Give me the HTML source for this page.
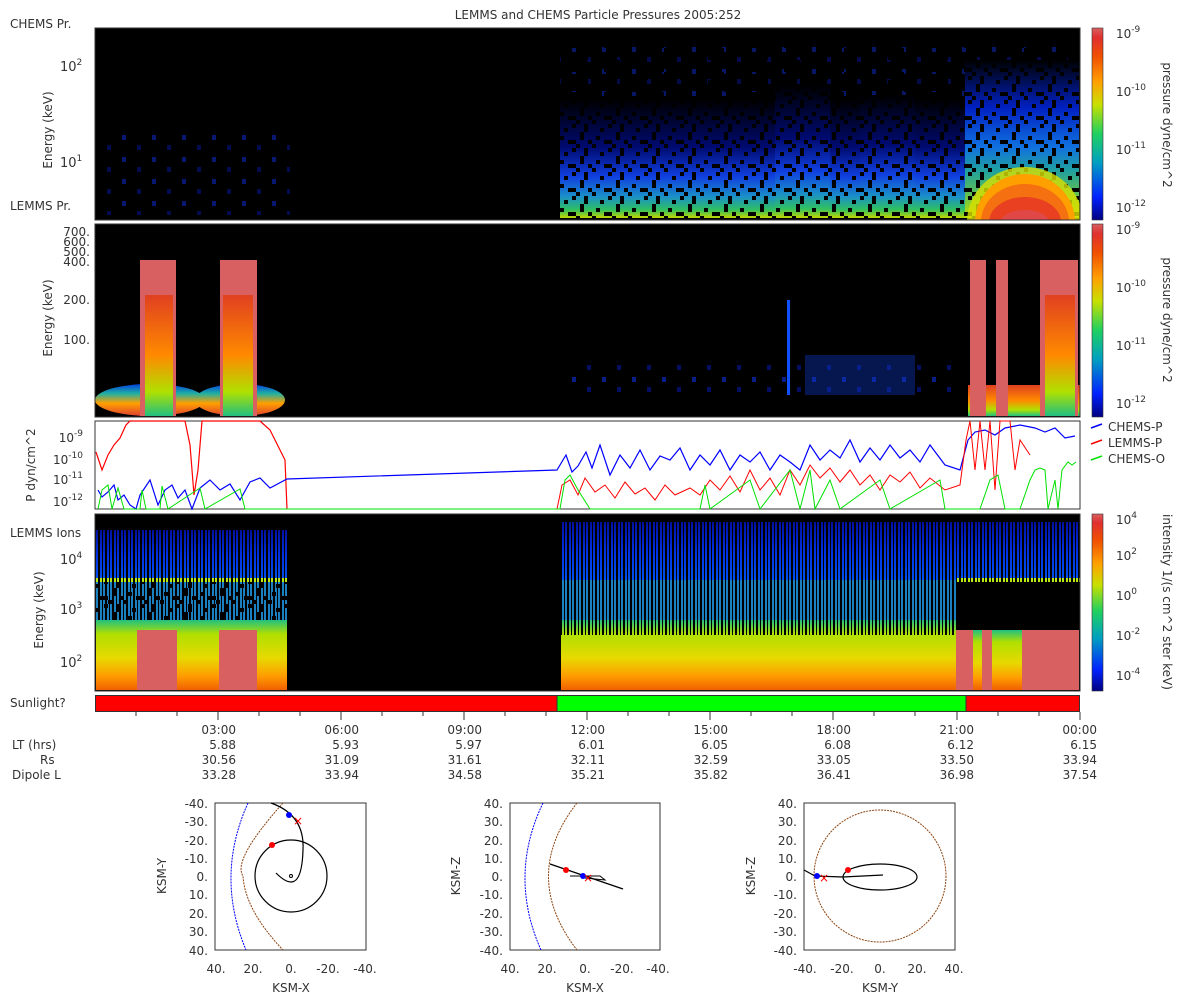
<!DOCTYPE html>
<html><head><meta charset="utf-8"><style>
body{margin:0;background:#fff;}
svg{display:block;font-family:"DejaVu Sans","Liberation Sans",sans-serif;}
text{fill:#333;}
</style></head><body>
<svg width="1200" height="1000" viewBox="0 0 1200 1000" xmlns="http://www.w3.org/2000/svg">
<defs>
<clipPath id="c1"><rect x="95" y="28" width="985" height="192"/></clipPath>
<linearGradient id="cb" x1="0" y1="1" x2="0" y2="0">
<stop offset="0" stop-color="#000080"/><stop offset="0.12" stop-color="#0022ff"/><stop offset="0.3" stop-color="#00a0c0"/><stop offset="0.45" stop-color="#20d060"/><stop offset="0.6" stop-color="#c8e000"/><stop offset="0.72" stop-color="#ffa000"/><stop offset="0.85" stop-color="#f05000"/><stop offset="0.95" stop-color="#e03030"/><stop offset="1" stop-color="#d86060"/>
</linearGradient>
<linearGradient id="p1r" x1="0" y1="0" x2="0" y2="1">
<stop offset="0" stop-color="#000"/><stop offset="0.3" stop-color="#0020c0"/><stop offset="0.55" stop-color="#1070e0"/><stop offset="0.7" stop-color="#20a0a0"/><stop offset="0.85" stop-color="#60c050"/><stop offset="1" stop-color="#c0e000"/>
</linearGradient>
<linearGradient id="p1m" x1="0" y1="0" x2="0" y2="1">
<stop offset="0" stop-color="#000"/><stop offset="0.4" stop-color="#000a70"/><stop offset="0.65" stop-color="#1040e0"/><stop offset="0.82" stop-color="#1a90c8"/><stop offset="0.93" stop-color="#30c060"/><stop offset="1" stop-color="#c0d800"/>
</linearGradient>
<linearGradient id="p4" x1="0" y1="0" x2="0" y2="1">
<stop offset="0" stop-color="#20c080"/><stop offset="0.2" stop-color="#b0e000"/><stop offset="0.55" stop-color="#e8d800"/><stop offset="0.8" stop-color="#ff9c00"/><stop offset="1" stop-color="#f06000"/>
</linearGradient>
<linearGradient id="p4b" x1="0" y1="0" x2="0" y2="1">
<stop offset="0" stop-color="#0010a0"/><stop offset="0.5" stop-color="#0030e0"/><stop offset="1" stop-color="#0050f0"/>
</linearGradient>
<linearGradient id="p2f" x1="0" y1="0" x2="0" y2="1">
<stop offset="0" stop-color="#0040e0"/><stop offset="0.3" stop-color="#20b0a0"/><stop offset="0.6" stop-color="#ffa000"/><stop offset="1" stop-color="#e04030"/>
</linearGradient>
<linearGradient id="p2i" x1="0" y1="0" x2="0" y2="1">
<stop offset="0" stop-color="#e04020"/><stop offset="0.5" stop-color="#ff8a00"/><stop offset="0.8" stop-color="#b0e000"/><stop offset="1" stop-color="#20c080"/>
</linearGradient>
<pattern id="dots1" width="30" height="22" patternUnits="userSpaceOnUse">
<rect x="2" y="3" width="4" height="5" fill="#1030e0"/><rect x="17" y="13" width="4" height="5" fill="#0818a0"/>
</pattern>
<pattern id="nz" width="36" height="24" patternUnits="userSpaceOnUse">
<rect x="0" y="0" width="4" height="4" fill="#000"/><rect x="8" y="4" width="4" height="8" fill="#000"/><rect x="16" y="0" width="4" height="4" fill="#000"/><rect x="24" y="8" width="4" height="4" fill="#000"/><rect x="32" y="4" width="4" height="4" fill="#000"/><rect x="4" y="12" width="4" height="8" fill="#000"/><rect x="20" y="16" width="4" height="4" fill="#000"/><rect x="28" y="20" width="8" height="4" fill="#000"/><rect x="12" y="20" width="4" height="4" fill="#000"/>
</pattern>
<pattern id="cols" width="7" height="10" patternUnits="userSpaceOnUse">
<rect x="0" y="0" width="2" height="10" fill="#000"/><rect x="4" y="0" width="1" height="10" fill="#000"/>
</pattern>
</defs>

<text x="598" y="19" font-size="12" text-anchor="middle">LEMMS and CHEMS Particle Pressures  2005:252</text>

<!-- Panel 1 -->
<rect x="95" y="28" width="985" height="192" fill="#000"/>
<g clip-path="url(#c1)">
<rect x="100" y="130" width="190" height="85" fill="url(#dots1)" opacity="0.5"/>
<rect x="560" y="40" width="520" height="90" fill="url(#dots1)" opacity="0.45"/>
<rect x="560" y="100" width="405" height="118" fill="url(#p1m)"/>
<rect x="775" y="85" width="55" height="133" fill="url(#p1m)"/>
<rect x="860" y="95" width="55" height="123" fill="url(#p1m)"/>
<rect x="965" y="60" width="114" height="158" fill="url(#p1r)"/>
<rect x="560" y="28" width="520" height="192" fill="url(#nz)"/>
<rect x="560" y="28" width="405" height="120" fill="url(#nz)"/>
<ellipse cx="1025" cy="222" rx="58" ry="55" fill="#d8e000" opacity="0.8"/>
<ellipse cx="1025" cy="222" rx="50" ry="48" fill="#ffa000"/>
<ellipse cx="1025" cy="222" rx="44" ry="38" fill="#f57010"/>
<ellipse cx="1025" cy="222" rx="36" ry="25" fill="#e84020"/>
<ellipse cx="1025" cy="222" rx="24" ry="12" fill="#e04848"/>
</g>
<rect x="95" y="28" width="985" height="192" fill="none" stroke="#333"/>
<text x="10" y="28" font-size="12">CHEMS Pr.</text>
<text x="10" y="210" font-size="12">LEMMS Pr.</text>
<text x="52" y="130" font-size="12" transform="rotate(-90 52 130)" text-anchor="middle">Energy (keV)</text>
<text x="60" y="71" font-size="13">10<tspan dy="-6" font-size="9">2</tspan></text>
<text x="60" y="167" font-size="13">10<tspan dy="-6" font-size="9">1</tspan></text>

<!-- Panel 2 -->
<rect x="95" y="224" width="985" height="193" fill="#000"/>
<ellipse cx="150" cy="400" rx="55" ry="16" fill="url(#p2f)"/>
<ellipse cx="240" cy="400" rx="45" ry="16" fill="url(#p2f)"/>
<rect x="140" y="260" width="36" height="156" fill="#d86060"/>
<rect x="220" y="260" width="37" height="156" fill="#d86060"/>
<rect x="145" y="295" width="28" height="121" fill="url(#p2i)"/>
<rect x="223" y="295" width="30" height="121" fill="url(#p2i)"/>
<rect x="565" y="360" width="390" height="35" fill="url(#dots1)" opacity="0.6"/>
<rect x="805" y="355" width="110" height="40" fill="#1040e0" opacity="0.35"/>
<rect x="787" y="300" width="3" height="95" fill="#1050ff"/>
<rect x="968" y="385" width="112" height="31" fill="url(#p2i)"/>
<rect x="970" y="260" width="16" height="156" fill="#d86060"/>
<rect x="996" y="260" width="12" height="156" fill="#d86060"/>
<rect x="1040" y="260" width="38" height="156" fill="#d86060"/>
<rect x="1045" y="295" width="30" height="121" fill="url(#p2i)"/>
<rect x="95" y="224" width="985" height="193" fill="none" stroke="#333"/>
<text x="52" y="318" font-size="12" transform="rotate(-90 52 318)" text-anchor="middle">Energy (keV)</text>
<g font-size="12" text-anchor="end">
<text x="90" y="236">700.</text><text x="90" y="246">600.</text><text x="90" y="256">500.</text><text x="90" y="266">400.</text><text x="90" y="304">200.</text><text x="90" y="344">100.</text>
</g>

<!-- Panel 3 -->
<rect x="95" y="421" width="985" height="88" fill="#fff" stroke="#333"/>
<polyline fill="none" stroke="#ff0000" stroke-width="1.2" points="96,452 102,470 108,455 114,445 120,438 126,425 130,421 185,421 190,445 194,495 198,470 202,421 260,421 270,430 280,450 285,460 287,509"/>
<polyline fill="none" stroke="#0000ff" stroke-width="1.2" points="98,490 102,497 108,492 114,485 118,500 124,495 130,505 136,509 140,495 150,480 158,505 165,490 172,485 178,498 185,490 192,509 200,488 210,480 220,490 230,484 240,500 250,482 260,478 270,488 287,479 557,470 566,455 572,472 578,466 586,452 592,468 600,445 610,475 620,455 630,468 640,450 650,470 660,456 670,460 680,448 690,470 700,455 710,465 720,450 730,470 740,455 750,462 760,452 770,470 780,455 790,462 800,470 810,445 820,460 830,450 840,458 850,440 860,462 870,448 880,460 890,445 900,458 910,450 920,462 930,445 945,465 960,470 968,440 975,432 985,430 995,435 1005,428 1020,425 1035,428 1045,432 1055,428 1065,438 1075,436"/>
<polyline fill="none" stroke="#ff0000" stroke-width="1" points="557,509 562,485 570,480 578,495 585,478 595,492 605,485 615,498 625,482 635,494 645,488 655,500 665,485 675,495 690,488 700,495 710,480 720,490 730,476 740,492 750,470 760,490 770,478 780,495 790,470 800,485 810,465 820,478 830,468 840,482 850,470 860,485 870,475 880,490 890,475 900,482 910,472 920,488 930,478 945,490 960,485 966,440 970,421 975,470 980,421 985,470 990,421 995,490 1000,421 1010,421 1015,470 1020,440 1030,455"/>
<polyline fill="none" stroke="#00e000" stroke-width="1" points="98,509 102,490 108,485 112,509 118,488 124,509 140,509 142,490 146,509 160,509 162,486 168,509 200,488 205,509 240,489 245,509 560,509 565,480 570,475 578,490 590,509 700,509 705,485 710,509 750,480 760,509 790,470 800,509 810,470 815,509 830,480 840,509 880,480 890,509 940,480 945,509 980,509 990,480 998,475 1005,509 1020,509 1030,480 1035,470 1040,468 1045,470 1048,509 1055,480 1058,509 1062,470 1068,462 1072,465 1076,462"/>
<text x="35" y="465" font-size="12" transform="rotate(-90 35 465)" text-anchor="middle">P dyn/cm^2</text>
<g font-size="12" text-anchor="end">
<text x="83" y="442">10<tspan dy="-6" font-size="9">-9</tspan></text>
<text x="83" y="464">10<tspan dy="-6" font-size="9">-10</tspan></text>
<text x="83" y="484">10<tspan dy="-6" font-size="9">-11</tspan></text>
<text x="83" y="506">10<tspan dy="-6" font-size="9">-12</tspan></text>
</g>
<g font-size="12">
<line x1="1091" y1="428" x2="1102" y2="424" stroke="#0000ff" stroke-width="1.5"/><text x="1108" y="431">CHEMS-P</text>
<line x1="1091" y1="444" x2="1102" y2="440" stroke="#ff0000" stroke-width="1.5"/><text x="1108" y="447">LEMMS-P</text>
<line x1="1091" y1="460" x2="1102" y2="456" stroke="#00e000" stroke-width="1.5"/><text x="1108" y="463">CHEMS-O</text>
</g>

<!-- Panel 4 -->
<rect x="95" y="514" width="985" height="177" fill="#000"/>
<rect x="96" y="530" width="191" height="50" fill="url(#p4b)"/>
<rect x="561" y="522" width="518" height="58" fill="url(#p4b)"/>
<rect x="96" y="580" width="191" height="50" fill="#1a80c0"/>
<rect x="561" y="580" width="395" height="50" fill="#1a80c0"/>
<rect x="96" y="580" width="191" height="50" fill="url(#nz)"/>
<rect x="96" y="578" width="191" height="4" fill="#b8e810"/>
<rect x="956" y="578" width="124" height="4" fill="#b8e810"/>
<rect x="96" y="530" width="191" height="100" fill="url(#cols)"/>
<rect x="561" y="522" width="518" height="108" fill="url(#cols)"/>
<rect x="96" y="600" width="191" height="30" fill="url(#nz)"/>
<rect x="96" y="620" width="191" height="70" fill="url(#p4)"/>
<rect x="561" y="620" width="395" height="70" fill="url(#p4)"/>
<rect x="561" y="620" width="395" height="15" fill="url(#cols)"/>
<rect x="973" y="630" width="9" height="60" fill="url(#p4)"/>
<rect x="992" y="630" width="30" height="60" fill="url(#p4)"/>
<rect x="137" y="630" width="40" height="60" fill="#d86060"/>
<rect x="219" y="630" width="38" height="60" fill="#d86060"/>
<rect x="956" y="630" width="17" height="60" fill="#d86060"/>
<rect x="982" y="630" width="10" height="60" fill="#d86060"/>
<rect x="1022" y="630" width="57" height="60" fill="#d86060"/>
<rect x="95" y="514" width="985" height="177" fill="none" stroke="#333"/>
<text x="10" y="537" font-size="12">LEMMS Ions</text>
<text x="43" y="610" font-size="12" transform="rotate(-90 43 610)" text-anchor="middle">Energy (keV)</text>
<g font-size="13">
<text x="60" y="564">10<tspan dy="-6" font-size="9">4</tspan></text>
<text x="60" y="614">10<tspan dy="-6" font-size="9">3</tspan></text>
<text x="60" y="667">10<tspan dy="-6" font-size="9">2</tspan></text>
</g>

<!-- colorbars -->
<rect x="1092" y="28" width="11" height="192" fill="url(#cb)" stroke="#333" stroke-width="0.6"/>
<rect x="1092" y="224" width="11" height="193" fill="url(#cb)" stroke="#333" stroke-width="0.6"/>
<rect x="1092" y="514" width="11" height="177" fill="url(#cb)" stroke="#333" stroke-width="0.6"/>
<g font-size="12">
<text x="1116" y="38">10<tspan dy="-6" font-size="9">-9</tspan></text>
<text x="1116" y="96">10<tspan dy="-6" font-size="9">-10</tspan></text>
<text x="1116" y="154">10<tspan dy="-6" font-size="9">-11</tspan></text>
<text x="1116" y="212">10<tspan dy="-6" font-size="9">-12</tspan></text>
<text x="1116" y="234">10<tspan dy="-6" font-size="9">-9</tspan></text>
<text x="1116" y="292">10<tspan dy="-6" font-size="9">-10</tspan></text>
<text x="1116" y="350">10<tspan dy="-6" font-size="9">-11</tspan></text>
<text x="1116" y="408">10<tspan dy="-6" font-size="9">-12</tspan></text>
<text x="1116" y="524">10<tspan dy="-6" font-size="9">4</tspan></text>
<text x="1116" y="560">10<tspan dy="-6" font-size="9">2</tspan></text>
<text x="1116" y="600">10<tspan dy="-6" font-size="9">0</tspan></text>
<text x="1116" y="640">10<tspan dy="-6" font-size="9">-2</tspan></text>
<text x="1116" y="680">10<tspan dy="-6" font-size="9">-4</tspan></text>
<text x="1163" y="125" transform="rotate(90 1163 125)" text-anchor="middle">pressure dyne/cm^2</text>
<text x="1163" y="320" transform="rotate(90 1163 320)" text-anchor="middle">pressure dyne/cm^2</text>
<text x="1163" y="602" transform="rotate(90 1163 602)" text-anchor="middle">intensity 1/(s cm^2 ster keV)</text>
</g>

<!-- Sunlight -->
<rect x="96" y="695" width="461" height="16" fill="#ff0000"/>
<rect x="557" y="695" width="409" height="16" fill="#00ff00"/>
<rect x="966" y="695" width="113" height="16" fill="#ff0000"/>
<line x1="557" y1="695" x2="557" y2="711" stroke="#333"/><line x1="966" y1="695" x2="966" y2="711" stroke="#333"/>
<rect x="95.5" y="695.5" width="984" height="16" fill="none" stroke="#333"/>
<text x="10" y="707" font-size="12">Sunlight?</text>
<g stroke="#333">
<line x1="218" y1="712" x2="218" y2="720"/><line x1="341" y1="712" x2="341" y2="720"/><line x1="464" y1="712" x2="464" y2="720"/><line x1="587" y1="712" x2="587" y2="720"/><line x1="710" y1="712" x2="710" y2="720"/><line x1="833" y1="712" x2="833" y2="720"/><line x1="957" y1="712" x2="957" y2="720"/><line x1="1080" y1="712" x2="1080" y2="720"/>
<line x1="136" y1="712" x2="136" y2="716"/><line x1="177" y1="712" x2="177" y2="716"/><line x1="259" y1="712" x2="259" y2="716"/><line x1="300" y1="712" x2="300" y2="716"/><line x1="382" y1="712" x2="382" y2="716"/><line x1="423" y1="712" x2="423" y2="716"/><line x1="505" y1="712" x2="505" y2="716"/><line x1="546" y1="712" x2="546" y2="716"/><line x1="628" y1="712" x2="628" y2="716"/><line x1="669" y1="712" x2="669" y2="716"/><line x1="751" y1="712" x2="751" y2="716"/><line x1="792" y1="712" x2="792" y2="716"/><line x1="874" y1="712" x2="874" y2="716"/><line x1="915" y1="712" x2="915" y2="716"/><line x1="998" y1="712" x2="998" y2="716"/><line x1="1039" y1="712" x2="1039" y2="716"/>
</g>
<g font-size="12" text-anchor="end">
<text x="236" y="734">03:00</text><text x="359" y="734">06:00</text><text x="482" y="734">09:00</text><text x="605" y="734">12:00</text><text x="728" y="734">15:00</text><text x="851" y="734">18:00</text><text x="974" y="734">21:00</text><text x="1097" y="734">00:00</text>
<text x="236" y="749">5.88</text><text x="359" y="749">5.93</text><text x="482" y="749">5.97</text><text x="605" y="749">6.01</text><text x="728" y="749">6.05</text><text x="851" y="749">6.08</text><text x="974" y="749">6.12</text><text x="1097" y="749">6.15</text>
<text x="236" y="764">30.56</text><text x="359" y="764">31.09</text><text x="482" y="764">31.61</text><text x="605" y="764">32.11</text><text x="728" y="764">32.59</text><text x="851" y="764">33.05</text><text x="974" y="764">33.50</text><text x="1097" y="764">33.94</text>
<text x="236" y="779">33.28</text><text x="359" y="779">33.94</text><text x="482" y="779">34.58</text><text x="605" y="779">35.21</text><text x="728" y="779">35.82</text><text x="851" y="779">36.41</text><text x="974" y="779">36.98</text><text x="1097" y="779">37.54</text>
</g>
<g font-size="12">
<text x="12" y="749">LT (hrs)</text><text x="40" y="764">Rs</text><text x="12" y="779">Dipole L</text>
</g>

<!-- Orbit plot 1 -->
<g>
<rect x="215" y="803" width="151" height="147" fill="#fff" stroke="#333"/>
<path d="M248,803 Q215,876 246,950" fill="none" stroke="#0000ff" stroke-dasharray="2,1"/>
<path d="M283,803 Q232,860 243,876 Q245,910 283,950" fill="none" stroke="#8b4513" stroke-dasharray="2,1"/>
<circle cx="291" cy="876" r="36" fill="none" stroke="#000" stroke-width="1.2"/>
<path d="M271,803 Q305,815 303,850 Q302,882 291,882 Q285,882 276,873" fill="none" stroke="#000" stroke-width="1.2"/>
<circle cx="291" cy="876" r="1.5" fill="none" stroke="#000"/>
<circle cx="289" cy="815" r="3" fill="#0000ff"/><text x="293" y="825" font-size="12" style="fill:#f00">×</text>
<circle cx="272" cy="845" r="3" fill="#ff0000"/>
</g>
<!-- Orbit plot 2 -->
<g>
<rect x="510" y="803" width="150" height="147" fill="#fff" stroke="#333"/>
<path d="M543,803 Q508,876 541,950" fill="none" stroke="#0000ff" stroke-dasharray="2,1"/>
<path d="M577,803 Q520,876 577,950" fill="none" stroke="#8b4513" stroke-dasharray="2,1"/>
<line x1="550" y1="864" x2="623" y2="889" stroke="#000" stroke-width="1.3"/>
<path d="M570,876 L600,876 L605,880 L585,878" fill="none" stroke="#000"/>
<circle cx="566" cy="870" r="3" fill="#ff0000"/><circle cx="583" cy="876" r="3" fill="#0000ff"/>
<text x="583" y="882" font-size="12" style="fill:#f00">×</text>
</g>
<!-- Orbit plot 3 -->
<g>
<rect x="804" y="803" width="151" height="147" fill="#fff" stroke="#333"/>
<circle cx="880" cy="876" r="66" fill="none" stroke="#8b4513" stroke-dasharray="2,1"/>
<ellipse cx="880" cy="877" rx="37" ry="13" fill="none" stroke="#000" stroke-width="1.2"/>
<path d="M804,870 L815,876 L843,877 L883,875" fill="none" stroke="#000" stroke-width="1.2"/>
<circle cx="848" cy="870" r="3" fill="#ff0000"/><circle cx="817" cy="876" r="3" fill="#0000ff"/>
<text x="819" y="882" font-size="12" style="fill:#f00">×</text>
</g>
<g font-size="12" text-anchor="end">
<text x="208" y="808">-40.</text><text x="208" y="826">-30.</text><text x="208" y="845">-20.</text><text x="208" y="863">-10.</text><text x="208" y="881">0.</text><text x="208" y="899">10.</text><text x="208" y="918">20.</text><text x="208" y="936">30.</text><text x="208" y="955">40.</text>
<text x="503" y="808">40.</text><text x="503" y="826">30.</text><text x="503" y="845">20.</text><text x="503" y="863">10.</text><text x="503" y="881">0.</text><text x="503" y="899">-10.</text><text x="503" y="918">-20.</text><text x="503" y="936">-30.</text><text x="503" y="955">-40.</text>
<text x="797" y="808">40.</text><text x="797" y="826">30.</text><text x="797" y="845">20.</text><text x="797" y="863">10.</text><text x="797" y="881">0.</text><text x="797" y="899">-10.</text><text x="797" y="918">-20.</text><text x="797" y="936">-30.</text><text x="797" y="955">-40.</text>
</g>
<g font-size="12" text-anchor="middle">
<text x="216" y="973">40.</text><text x="253" y="973">20.</text><text x="291" y="973">0.</text><text x="328" y="973">-20.</text><text x="365" y="973">-40.</text>
<text x="510" y="973">40.</text><text x="547" y="973">20.</text><text x="585" y="973">0.</text><text x="622" y="973">-20.</text><text x="658" y="973">-40.</text>
<text x="805" y="973">-40.</text><text x="842" y="973">-20.</text><text x="880" y="973">0.</text><text x="917" y="973">20.</text><text x="954" y="973">40.</text>
<text x="291" y="992">KSM-X</text><text x="585" y="992">KSM-X</text><text x="880" y="992">KSM-Y</text>
</g>
<text x="166" y="876" font-size="12" transform="rotate(-90 166 876)" text-anchor="middle">KSM-Y</text>
<text x="460" y="876" font-size="12" transform="rotate(-90 460 876)" text-anchor="middle">KSM-Z</text>
<text x="755" y="876" font-size="12" transform="rotate(-90 755 876)" text-anchor="middle">KSM-Z</text>
</svg>
</body></html>
